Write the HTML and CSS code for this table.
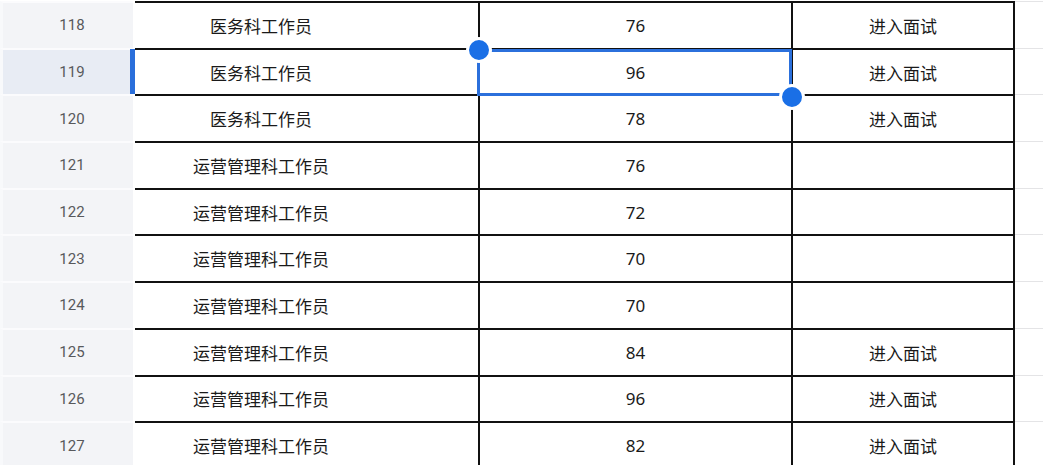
FILE: index.html
```html
<!DOCTYPE html>
<html lang="zh">
<head>
<meta charset="utf-8">
<title>Sheet</title>
<link rel="stylesheet" href="styles.css">
</head>
<body>
<div class="sheet">
  <div class="row"><div class="rh">118</div><div class="c a">医务科工作员</div><div class="c b">76</div><div class="c d">进入面试</div><div class="c e"></div></div>
  <div class="row sel"><div class="rh">119</div><div class="c a">医务科工作员</div><div class="c b active">96<span class="handle h1"></span><span class="handle h2"></span></div><div class="c d">进入面试</div><div class="c e"></div></div>
  <div class="row"><div class="rh">120</div><div class="c a">医务科工作员</div><div class="c b">78</div><div class="c d">进入面试</div><div class="c e"></div></div>
  <div class="row"><div class="rh">121</div><div class="c a">运营管理科工作员</div><div class="c b">76</div><div class="c d"></div><div class="c e"></div></div>
  <div class="row"><div class="rh">122</div><div class="c a">运营管理科工作员</div><div class="c b">72</div><div class="c d"></div><div class="c e"></div></div>
  <div class="row"><div class="rh">123</div><div class="c a">运营管理科工作员</div><div class="c b">70</div><div class="c d"></div><div class="c e"></div></div>
  <div class="row"><div class="rh">124</div><div class="c a">运营管理科工作员</div><div class="c b">70</div><div class="c d"></div><div class="c e"></div></div>
  <div class="row"><div class="rh">125</div><div class="c a">运营管理科工作员</div><div class="c b">84</div><div class="c d">进入面试</div><div class="c e"></div></div>
  <div class="row"><div class="rh">126</div><div class="c a">运营管理科工作员</div><div class="c b">96</div><div class="c d">进入面试</div><div class="c e"></div></div>
  <div class="row"><div class="rh">127</div><div class="c a">运营管理科工作员</div><div class="c b">82</div><div class="c d">进入面试</div><div class="c e"></div></div>
</div>
</body>
</html>
```

FILE: styles.css
```css
html, body {
  margin: 0;
  padding: 0;
  background: #ffffff;
  overflow: hidden;
}
body {
  width: 1043px;
  height: 465px;
}
.sheet {
  margin-top: 1px;
  display: flex;
  flex-direction: column;
}
.row {
  display: flex;
  height: 46.7px;
  flex: none;
}
.rh {
  position: relative;
  box-sizing: border-box;
  width: 133px;
  margin-right: 2px;
  border-top: 2px solid #fbfbfd;
  border-left: 3px solid #f8f9fb;
  background: #f3f4f7;
  color: #58595c;
  font-family: Roboto, "Noto Sans", sans-serif;
  font-size: 15px;
  display: flex;
  align-items: center;
  justify-content: center;
  padding-left: 8px;
}
.sel .rh {
  background: #e8ecf4;
}
.sel .rh::after {
  content: "";
  position: absolute;
  top: -1px;
  bottom: 0;
  right: -2px;
  width: 5px;
  background: #2a6fdb;
}
.c {
  box-sizing: border-box;
  border-top: 2px solid #111;
  border-right: 2px solid #111;
  display: flex;
  align-items: center;
  justify-content: center;
  font-family: "Noto Sans", "Noto Sans CJK SC", sans-serif;
  font-size: 17px;
  color: #1a1a1a;
  flex: none;
}
.a {
  width: 345px;
  padding-right: 91px;
}
.b {
  width: 313px;
}
.d {
  width: 222px;
}
.e {
  flex: 1;
  border-top: 1px solid #e4e4e6;
  border-right: none;
}
.active {
  position: relative;
}
.active::before {
  content: "";
  position: absolute;
  left: -3px;
  top: -1px;
  right: -1px;
  bottom: -2px;
  border: 3px solid #2b70dc;
}
.handle {
  position: absolute;
  box-sizing: border-box;
  width: 26px;
  height: 26px;
  border-radius: 50%;
  border: 3px solid #ffffff;
  background: #1a6fe6;
  z-index: 2;
}
.h1 {
  left: -14.5px;
  top: -12.5px;
}
.h2 {
  left: 299px;
  top: 34.5px;
}
```
